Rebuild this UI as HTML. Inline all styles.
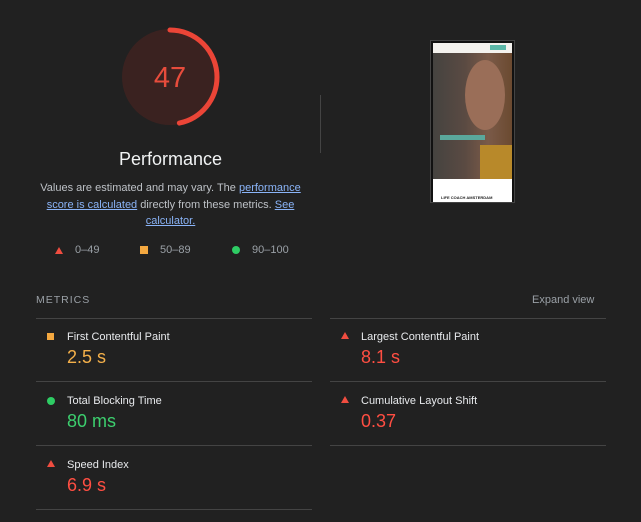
<!DOCTYPE html>
<html><head><meta charset="utf-8"><style>
body{margin:0;width:641px;height:522px;background:#212121;font-family:"Liberation Sans",sans-serif;color:#e8eaed;position:relative;overflow:hidden}
.a{position:absolute}
.desc{left:0;top:180px;width:341px;text-align:center;font-size:11px;line-height:16.5px;color:#bdc1c6;white-space:nowrap}
.desc u{color:#8ab4f8}
.leg{font-size:11px;color:#9aa0a6;top:244px}
.line{height:1px;background:#444}
.mt{font-size:11px;color:#e8eaed}
.mv{font-size:18px}
.red{color:#ff4e42}.org{color:#f4b04a}.grn{color:#3ccf6e}
.tri{width:0;height:0;border-left:4px solid transparent;border-right:4px solid transparent;border-bottom:7px solid #f04d40}
</style></head><body>
<svg class="a" style="left:0;top:0" width="641" height="140">
<circle cx="170" cy="77" r="48" fill="#3a2220"/>
<circle cx="170" cy="77" r="47" fill="none" stroke="#eb4537" stroke-width="5" stroke-linecap="round" stroke-dasharray="138 300" transform="rotate(-90 170 77)"/>
<text x="170" y="87" text-anchor="middle" font-family="Liberation Sans" font-size="29" fill="#e74c3c">47</text>
</svg>
<div class="a" style="left:0;width:341px;top:149px;text-align:center;font-size:18px;color:#f1f3f4">Performance</div>
<div class="a desc">Values are estimated and may vary. The <u>performance</u><br><u>score is calculated</u> directly from these metrics. <u>See</u><br><u>calculator.</u></div>
<div class="a tri" style="left:55px;top:247px"></div><div class="a leg" style="left:75px">0–49</div>
<div class="a" style="left:140px;top:246px;width:8px;height:8px;background:#f4a840"></div><div class="a leg" style="left:160px">50–89</div>
<div class="a" style="left:232px;top:246px;width:8px;height:8px;border-radius:50%;background:#2ecc64"></div><div class="a leg" style="left:252px">90–100</div>
<div class="a" style="left:320px;top:95px;width:1px;height:58px;background:#444"></div>
<div class="a" style="left:430px;top:40px;width:85px;height:163px;background:#111;border:1px solid #444;box-sizing:border-box"></div>
<div class="a" style="left:433px;top:43px;width:79px;height:10px;background:#f4f2ee"></div>
<div class="a" style="left:490px;top:45px;width:16px;height:5px;background:#5cb8a8"></div>
<div class="a" style="left:433px;top:53px;width:79px;height:126px;background:linear-gradient(90deg,#454340 0%,#5a4a42 40%,#7a5a48 70%,#6b4a30 100%)"></div>
<div class="a" style="left:465px;top:60px;width:40px;height:70px;border-radius:50%;background:#9a6e58"></div>
<div class="a" style="left:480px;top:145px;width:32px;height:34px;background:#b8892a"></div>
<div class="a" style="left:440px;top:135px;width:45px;height:5px;background:#5aa89c"></div>
<div class="a" style="left:433px;top:179px;width:79px;height:23px;background:#fff"></div>
<div class="a" style="left:441px;top:195px;font-size:4px;color:#222;font-weight:bold">LIFE COACH AMSTERDAM</div>
<div class="a" style="left:36px;top:294px;font-size:10.5px;letter-spacing:1px;color:#9aa0a6">METRICS</div>
<div class="a" style="left:532px;top:294px;font-size:11px;color:#9aa0a6">Expand view</div>
<div class="a line" style="left:36px;top:318px;width:276px"></div>
<div class="a line" style="left:36px;top:381px;width:276px"></div>
<div class="a line" style="left:36px;top:445px;width:276px"></div>
<div class="a line" style="left:36px;top:509px;width:276px"></div>
<div class="a line" style="left:330px;top:318px;width:276px"></div>
<div class="a line" style="left:330px;top:381px;width:276px"></div>
<div class="a line" style="left:330px;top:445px;width:276px"></div>
<div class="a" style="left:47px;top:333px;width:7px;height:7px;background:#f4a840"></div>
<div class="a mt" style="left:67px;top:331px">First Contentful Paint</div>
<div class="a mv org" style="left:67px;top:347px">2.5 s</div>
<div class="a" style="left:47px;top:397px;width:8px;height:8px;border-radius:50%;background:#2ecc64"></div>
<div class="a mt" style="left:67px;top:395px">Total Blocking Time</div>
<div class="a mv grn" style="left:67px;top:411px">80 ms</div>
<div class="a tri" style="left:47px;top:460px"></div>
<div class="a mt" style="left:67px;top:459px">Speed Index</div>
<div class="a mv red" style="left:67px;top:475px">6.9 s</div>
<div class="a tri" style="left:341px;top:332px"></div>
<div class="a mt" style="left:361px;top:331px">Largest Contentful Paint</div>
<div class="a mv red" style="left:361px;top:347px">8.1 s</div>
<div class="a tri" style="left:341px;top:396px"></div>
<div class="a mt" style="left:361px;top:395px">Cumulative Layout Shift</div>
<div class="a mv red" style="left:361px;top:411px">0.37</div>
</body></html>
